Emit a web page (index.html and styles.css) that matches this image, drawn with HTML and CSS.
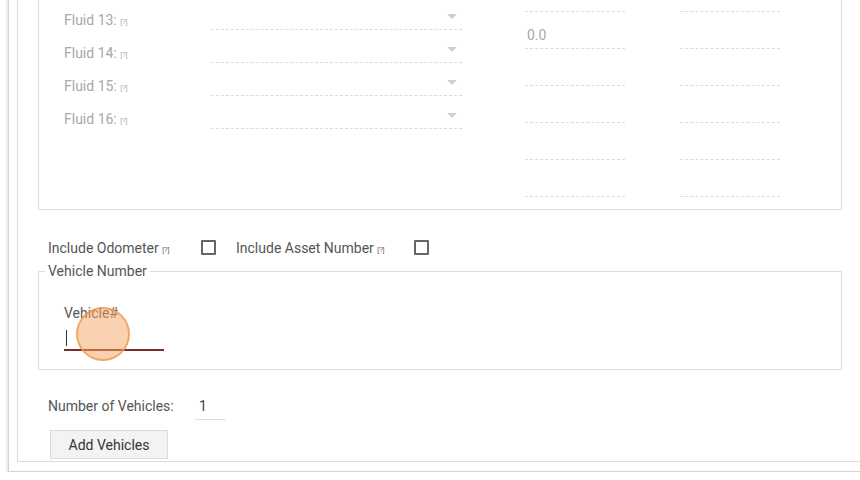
FILE: index.html
```html
<!DOCTYPE html>
<html>
<head>
<meta charset="utf-8">
<link rel="stylesheet" href="styles.css">
</head>
<body>
<div class="outer">
  <div class="inner">
    <div class="box fluids">
      <div class="left-col">
        <div class="frow"><span class="flabel"></span><div class="fselect"><span class="arrow"></span></div></div>
        <div class="frow"><span class="flabel">Fluid 13: <span class="help">[?]</span></span><div class="fselect"><span class="arrow"></span></div></div>
        <div class="frow"><span class="flabel">Fluid 14: <span class="help">[?]</span></span><div class="fselect"><span class="arrow"></span></div></div>
        <div class="frow"><span class="flabel">Fluid 15: <span class="help">[?]</span></span><div class="fselect"><span class="arrow"></span></div></div>
        <div class="frow"><span class="flabel">Fluid 16: <span class="help">[?]</span></span><div class="fselect"><span class="arrow"></span></div></div>
      </div>
      <div class="num-col first">
        <div class="ninput"></div>
        <div class="ninput">0.0</div>
        <div class="ninput"></div>
        <div class="ninput"></div>
        <div class="ninput"></div>
        <div class="ninput"></div>
      </div>
      <div class="num-col second">
        <div class="ninput"></div>
        <div class="ninput"></div>
        <div class="ninput"></div>
        <div class="ninput"></div>
        <div class="ninput"></div>
        <div class="ninput"></div>
      </div>
    </div>

    <div class="include-row">
      <span class="ilabel odo">Include Odometer <span class="help">[?]</span></span>
      <span class="checkbox"></span>
      <span class="ilabel asset">Include Asset Number <span class="help">[?]</span></span>
      <span class="checkbox"></span>
    </div>

    <fieldset class="vehicle">
      <legend>Vehicle Number</legend>
      <div class="vbody">
        <div class="vlabel">Vehicle#</div>
        <div class="vinput"><span class="caret"></span></div>
        <span class="click-dot"></span>
      </div>
    </fieldset>

    <div class="count-row">
      <span class="clabel">Number of Vehicles:</span>
      <div class="cinput">1</div>
    </div>

    <button class="add-btn">Add Vehicles</button>
  </div>
</div>
</body>
</html>
```

FILE: styles.css
```css
html, body {
  margin: 0;
  padding: 0;
  overflow: hidden;
  background: #ffffff;
  font-family: Roboto, "Liberation Sans", sans-serif;
  font-size: 14px;
  color: #555555;
}

.outer {
  margin: -37px 0 0 8px;
  width: 1000px;
  border-left: 1px solid #d4d4d4;
  border-bottom: 1px solid #d4d4d4;
  box-shadow: -1px 1px 3px rgba(0, 0, 0, 0.12);
  padding: 0 0 9px 8px;
  background: #fff;
}

.inner {
  border-left: 1px solid #dcdcdc;
  border-bottom: 1px solid #dcdcdc;
  padding: 0 0 2px 20px;
}

.box {
  box-sizing: border-box;
  width: 804px;
  border: 1px solid #dedede;
}

.fluids {
  display: flex;
  align-items: flex-start;
  padding: 0 0 12px 25px;
}

.left-col {
  display: flex;
  flex-direction: column;
}

.frow {
  display: flex;
  align-items: flex-end;
  height: 33px;
}

.flabel {
  width: 147px;
  line-height: 20px;
  margin-bottom: -2px;
  color: #a8a8a8;
}

.help {
  font-family: "Liberation Sans", sans-serif;
  font-size: 7px;
  letter-spacing: -0.3px;
  vertical-align: 1px;
}

.fselect {
  box-sizing: border-box;
  width: 251px;
  height: 33px;
  border-bottom: 1px dashed #dcdcdc;
  display: flex;
  justify-content: flex-end;
  align-items: flex-start;
  padding: 17px 5px 0 0;
}

.arrow {
  width: 0;
  height: 0;
  border-left: 5px solid transparent;
  border-right: 5px solid transparent;
  border-top: 5px solid #cfcfcf;
}

.num-col {
  display: flex;
  flex-direction: column;
  padding-top: 11px;
  width: 100px;
}

.num-col.first {
  margin-left: 63px;
}

.num-col.second {
  margin-left: 55px;
}

.ninput {
  box-sizing: border-box;
  height: 37px;
  padding: 10px 2px 0;
  line-height: 26px;
  border-bottom: 1px dashed #dcdcdc;
  color: #a8a8a8;
}

.include-row {
  display: flex;
  align-items: flex-start;
  height: 20px;
  margin-top: 28px;
  padding-left: 10px;
  line-height: 20px;
}

.ilabel.odo {
  width: 153px;
}

.ilabel.asset {
  width: 178px;
}

.checkbox {
  box-sizing: border-box;
  width: 15px;
  height: 15px;
  margin-top: 2px;
  border: 2px solid #666666;
  border-radius: 1px;
  margin-right: 20px;
}

.vehicle {
  box-sizing: border-box;
  width: 804px;
  margin: 5px 0 0;
  padding: 0 0 18px 6px;
  border: 1px solid #dedede;
  min-width: 0;
}

.vehicle legend {
  padding: 0 3px;
  line-height: 16px;
  color: #555555;
}

.vbody {
  position: relative;
  padding: 25px 0 0 19px;
}

.vlabel {
  line-height: 18px;
  color: #555555;
}

.vinput {
  box-sizing: border-box;
  width: 100px;
  height: 29px;
  padding: 8px 0 0 2px;
  border-bottom: 2px solid #7d2b2b;
}

.caret {
  display: block;
  width: 1px;
  height: 16px;
  background: #333333;
}

.click-dot {
  position: absolute;
  left: 31px;
  top: 28px;
  box-sizing: border-box;
  width: 54px;
  height: 54px;
  border-radius: 50%;
  background: rgba(248, 165, 100, 0.5);
  border: 2px solid rgba(240, 150, 75, 0.75);
}

.count-row {
  display: flex;
  align-items: flex-start;
  margin-top: 26px;
  padding-left: 10px;
}

.clabel {
  width: 147px;
  line-height: 21px;
}

.cinput {
  box-sizing: border-box;
  width: 31px;
  height: 24px;
  padding: 0 4px;
  line-height: 21px;
  color: #444444;
  border-bottom: 1px solid #dedede;
}

.add-btn {
  display: block;
  box-sizing: border-box;
  margin: 10px 0 0 12px;
  width: 118px;
  height: 29px;
  padding: 0;
  background: #f3f3f3;
  border: 1px solid #dadada;
  border-radius: 0;
  font-family: Roboto, "Liberation Sans", sans-serif;
  font-size: 14px;
  color: #333333;
}
```
